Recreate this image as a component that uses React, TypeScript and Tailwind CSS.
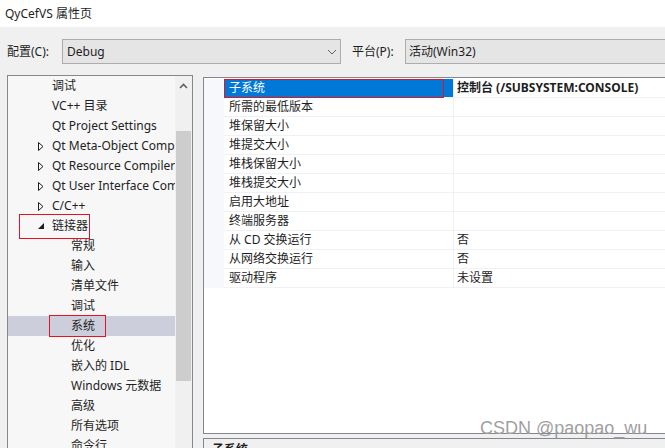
import React from "react";

const font = { fontFamily: '"Noto Sans", "Noto Sans CJK SC", sans-serif' };

type TreeItem = { label: string; level: 1 | 2; arrow?: "closed" | "open"; selected?: boolean; boxed?: boolean };

const tree: TreeItem[] = [
  { label: "调试", level: 1 },
  { label: "VC++ 目录", level: 1 },
  { label: "Qt Project Settings", level: 1 },
  { label: "Qt Meta-Object Compiler", level: 1, arrow: "closed" },
  { label: "Qt Resource Compiler", level: 1, arrow: "closed" },
  { label: "Qt User Interface Compiler", level: 1, arrow: "closed" },
  { label: "C/C++", level: 1, arrow: "closed" },
  { label: "链接器", level: 1, arrow: "open", boxed: true },
  { label: "常规", level: 2 },
  { label: "输入", level: 2 },
  { label: "清单文件", level: 2 },
  { label: "调试", level: 2 },
  { label: "系统", level: 2, selected: true, boxed: true },
  { label: "优化", level: 2 },
  { label: "嵌入的 IDL", level: 2 },
  { label: "Windows 元数据", level: 2 },
  { label: "高级", level: 2 },
  { label: "所有选项", level: 2 },
  { label: "命令行", level: 2 },
];

const props: [string, string][] = [
  ["子系统", "控制台 (/SUBSYSTEM:CONSOLE)"],
  ["所需的最低版本", ""],
  ["堆保留大小", ""],
  ["堆提交大小", ""],
  ["堆栈保留大小", ""],
  ["堆栈提交大小", ""],
  ["启用大地址", ""],
  ["终端服务器", ""],
  ["从 CD 交换运行", "否"],
  ["从网络交换运行", "否"],
  ["驱动程序", "未设置"],
];

function Chevron() {
  return (
    <svg width="10" height="6" viewBox="0 0 10 6" className="shrink-0">
      <path d="M1 1 L5 5 L9 1" fill="none" stroke="#606060" strokeWidth="1" />
    </svg>
  );
}

function TreeRow({ item }: { item: TreeItem }) {
  return (
    <div className={`relative flex h-[20px] items-center whitespace-nowrap ${item.selected ? "bg-[#cccedb]" : ""}`}>
      <div className={`flex shrink-0 items-center ${item.level === 1 ? "w-[44px] pl-[30px]" : "w-[63px]"}`}>
        {item.arrow === "closed" && (
          <svg width="6" height="9" viewBox="0 0 6 9">
            <path d="M0.5 0.5 L5 4.5 L0.5 8.5 Z" fill="none" stroke="#1e1e1e" strokeWidth="1" />
          </svg>
        )}
        {item.arrow === "open" && (
          <svg width="6" height="6" viewBox="0 0 6 6">
            <path d="M6 0 L6 6 L0 6 Z" fill="#1e1e1e" />
          </svg>
        )}
      </div>
      <span className={`text-[12px] text-[#1e1e1e] ${item.boxed && item.level === 2 ? "outline outline-1 outline-[#e81123] -ml-[21px] pl-[21px] pr-[10px] py-[1px]" : ""}`}>
        {item.label}
      </span>
      {item.boxed && item.level === 1 && (
        <div className="pointer-events-none absolute left-[11px] top-[-2px] h-[25px] w-[71px] border border-[#e81123]" />
      )}
    </div>
  );
}

export default function App() {
  return (
    <div className="relative h-[448px] w-[665px] overflow-hidden bg-[#f0f0f0]" style={font}>
      {/* title bar */}
      <div className="flex h-[27px] items-center bg-white pl-[5px] text-[12px] text-[#1e1e1e]">QyCefVS 属性页</div>

      {/* config row */}
      <div className="mt-[12px] flex h-[25px] items-center text-[12px] text-[#1e1e1e]">
        <span className="w-[62px] shrink-0 pl-[7px]">配置(C):</span>
        <div className="flex h-[25px] w-[279px] shrink-0 items-center justify-between border border-[#adadad] bg-[#e5e5e5] pl-[4px] pr-[3px]">
          <span>Debug</span>
          <Chevron />
        </div>
        <span className="ml-[11px] w-[53px] shrink-0">平台(P):</span>
        <div className="flex h-[25px] flex-1 items-center border border-r-0 border-[#adadad] bg-[#e5e5e5] pl-[3px]">
          <span>活动(Win32)</span>
        </div>
      </div>

      {/* main area */}
      <div className="mt-[11px] flex">
        {/* tree */}
        <div className="ml-[7px] flex h-[380px] w-[186px] border border-b-0 border-[#828790] bg-[#f7f7f7]">
          <div className="flex-1 overflow-hidden">
            {tree.map((t, i) => (
              <TreeRow key={i} item={t} />
            ))}
          </div>
          <div className="flex w-[17px] flex-col items-center bg-[#f0f0f0]">
            <div className="flex h-[20px] items-center justify-center">
              <svg width="9" height="6" viewBox="0 0 9 6">
                <path d="M1 5 L4.5 1.5 L8 5" fill="none" stroke="#606060" strokeWidth="1.6" />
              </svg>
            </div>
            <div className="mt-[35px] h-[250px] w-[15px] bg-[#cdcdcd]" />
          </div>
        </div>

        {/* right side */}
        <div className="ml-[10px] flex flex-1 flex-col pt-[2px]">
          <div className="h-[357px] border border-r-0 border-[#828790] bg-white pt-[1px]">
            {props.map(([k, v], i) => (
              <div key={i} className="flex h-[19px]">
                <div className="w-[20px] bg-[#f7f8fc]" />
                <div
                  className={`relative flex w-[230px] items-center border-b border-r border-[#eff1f6] pl-[5px] text-[12px] ${
                    i === 0 ? "bg-[#0078d7] text-white" : "text-[#1e1e1e]"
                  }`}
                >
                  {k}
                  {i === 0 && <div className="pointer-events-none absolute left-0 top-0 h-[19px] w-[220px] border border-[#e81123]" />}
                </div>
                <div
                  className={`flex flex-1 items-center whitespace-nowrap border-b border-[#eff1f6] pl-[3px] text-[12px] text-[#1e1e1e] ${
                    i === 0 ? "font-bold" : ""
                  }`}
                >
                  {v}
                </div>
              </div>
            ))}
          </div>
          <div className="mt-[4px] h-[20px] border border-r-0 border-[#828790] bg-[#f0f0f0] pl-[8px] pt-[2px] text-[12px] font-bold text-[#1e1e1e]">
            子系统
          </div>
        </div>
      </div>

      {/* watermark */}
      <div
        className="pointer-events-none absolute left-[480px] top-[415px] text-[18px] text-[#9f9f9f]"
        style={{ fontFamily: '"Liberation Sans", Arial, sans-serif' }}
      >
        CSDN @paopao_wu
      </div>
    </div>
  );
}
